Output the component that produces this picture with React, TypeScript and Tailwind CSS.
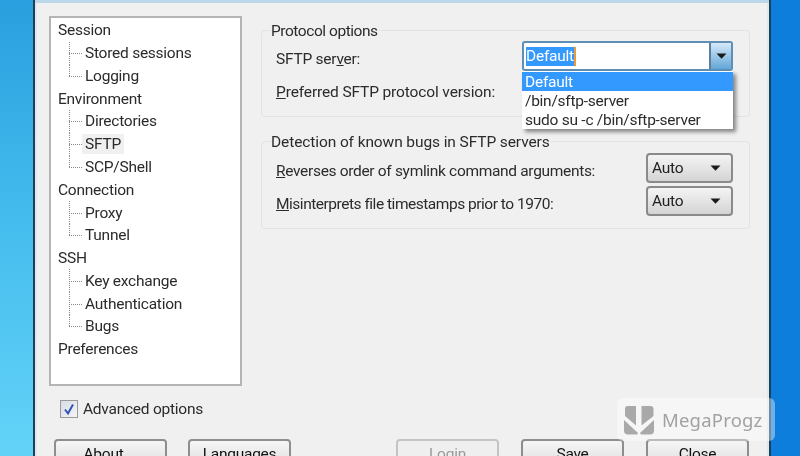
const tree: { label: string; children?: string[]; selected?: string }[] = [
  { label: "Session", children: ["Stored sessions", "Logging"] },
  { label: "Environment", children: ["Directories", "SFTP", "SCP/Shell"], selected: "SFTP" },
  { label: "Connection", children: ["Proxy", "Tunnel"] },
  { label: "SSH", children: ["Key exchange", "Authentication", "Bugs"] },
  { label: "Preferences" },
];

function Caret() {
  return (
    <svg width="11" height="6" viewBox="0 0 11 6" className="shrink-0">
      <path d="M0.5 0.5h10L5.5 5.8z" fill="#1a1a1a" />
    </svg>
  );
}

function AutoSelect() {
  return (
    <div className="flex h-[30px] w-[87px] items-center justify-between rounded-[4px] border-2 border-[#8a8a8a] bg-gradient-to-b from-[#f4f4f4] to-[#d4d4d4] pl-[4px] pr-[10px] text-[#222]">
      <span>Auto</span>
      <Caret />
    </div>
  );
}

function Button({ label, width, disabled, extra }: { label: string; width: string; disabled?: boolean; extra?: string }) {
  return (
    <div
      className={`flex h-[32px] shrink-0 justify-center rounded-[4px] border-2 pt-[3px] ${width} ${extra ?? ""} ${
        disabled
          ? "border-[#c4c4c4] bg-[#efefef] text-[#9a9a9a]"
          : "border-[#8e8e8e] bg-gradient-to-b from-[#f6f6f6] to-[#dcdcdc] text-[#111]"
      }`}
    >
      {label}
    </div>
  );
}

export default function App() {
  return (
    <div className="relative flex h-[456px] w-[800px] overflow-hidden font-['Roboto','Noto_Sans',sans-serif] text-[15.5px] leading-[20px] tracking-[-0.25px] text-[#2b2b2b] blur-[0.4px]">
      <div className="w-[33px] shrink-0 bg-gradient-to-b from-[#2a9fdf] via-[#45bdee] to-[#63d3f8]" />
      <div className="flex min-w-0 flex-1 flex-col border-x-2 border-[#1f3f57] bg-[#f0f0f0] shadow-[inset_2px_0_0_#dde8f0,inset_-2px_0_0_#dde8f0]">
        <div className="h-[3px] shrink-0 bg-[#bcd6ea]" />
        <div className="flex gap-[19px] pl-[14px] pr-[19px] pt-[13px]">
          <div className="h-[370px] w-[193px] shrink-0 border-2 border-[#b4b4b4] bg-white pl-[7px] pt-[1px]">
            {tree.map((node) => (
              <div key={node.label}>
                <div className="flex h-[22.78px] items-center">{node.label}</div>
                {node.children?.map((child, i) => {
                  const last = i === node.children!.length - 1;
                  return (
                    <div key={child} className="flex h-[22.78px] items-center pl-[11px]">
                      <div className="relative h-full w-[16px] shrink-0">
                        <div
                          className={`w-[1px] border-l border-dotted border-[#8a8a8a] ${last ? "h-1/2" : "h-full"}`}
                        />
                        <div className="absolute left-0 top-1/2 w-[13px] border-t border-dotted border-[#8a8a8a]" />
                      </div>
                      <span className={child === node.selected ? "-mx-[3px] bg-[#f0f0f0] px-[3px]" : ""}>{child}</span>
                    </div>
                  );
                })}
              </div>
            ))}
          </div>

          <div className="flex min-w-0 flex-1 flex-col gap-[14px] pt-[3px]">
            <fieldset className="h-[98px] rounded-[4px] border border-[#e3e3e3] pl-[14px] pr-[16px]">
              <legend className="-ml-[5px] bg-[#f0f0f0] pr-[1px] pt-[2px] tracking-[-0.45px]">Protocol options</legend>
              <div className="flex h-[32px] items-center pt-[3px]">
                <span>
                  SFTP ser<span className="underline">v</span>er:
                </span>
              </div>
              <div className="flex h-[36px] items-center pt-[2px]">
                <span className="tracking-[-0.13px]">
                  <span className="underline">P</span>referred SFTP protocol version:
                </span>
              </div>
            </fieldset>

            <fieldset className="h-[98px] rounded-[4px] border border-[#e3e3e3] pl-[14px] pr-[16px]">
              <legend className="-ml-[5px] bg-[#f0f0f0] pr-[1px] pt-[1px] tracking-[-0.1px]">Detection of known bugs in SFTP servers</legend>
              <div className="flex h-[32px] items-center justify-between">
                <span className="pt-[6px] tracking-[-0.32px]">
                  <span className="underline">R</span>everses order of symlink command arguments:
                </span>
                <AutoSelect />
              </div>
              <div className="flex h-[34px] items-center justify-between">
                <span className="pt-[6px] tracking-[-0.48px]">
                  <span className="underline">M</span>isinterprets file timestamps prior to 1970:
                </span>
                <AutoSelect />
              </div>
            </fieldset>
          </div>
        </div>

        <div className="flex h-[46px] items-center gap-[5px] pl-[25px] pt-[13px]">
          <div className="flex h-[18px] w-[18px] items-center justify-center border border-[#9a9a9a] bg-gradient-to-br from-[#d8dce4] to-[#f4f5f8]">
            <svg width="14" height="14" viewBox="0 0 14 14">
              <path d="M3 7.5l3 4L11 2.5" fill="none" stroke="#3454b4" strokeWidth="2" />
            </svg>
          </div>
          <span>Advanced options</span>
        </div>

        <div className="flex pl-[19px] pr-[20px] pt-[20px]">
          <Button label="About" width="w-[113px]" extra="pr-[14px]" />
          <div className="w-[21px]" />
          <Button label="Languages" width="w-[103px]" />
          <div className="flex-1" />
          <Button label="Login" width="w-[103px]" disabled />
          <div className="w-[22px]" />
          <Button label="Save" width="w-[103px]" />
          <div className="w-[22px]" />
          <Button label="Close" width="w-[103px]" />
        </div>
      </div>
      <div className="w-[29px] shrink-0 bg-[#0d7edb]" />

      <div className="absolute left-[522px] top-[41px] w-[211px]">
        <div className="flex h-[30px] items-stretch rounded-[3px] border-2 border-[#5e8fb4] bg-white">
          <div className="flex flex-1 items-center pl-[2px]">
            <span className="border-r-2 border-[#e99a3c] bg-[#3399ff] leading-[19px] text-white">Default</span>
          </div>
          <div className="flex w-[22px] items-center justify-center border-l-2 border-[#5e7f9c] bg-gradient-to-b from-[#d4e9f8] to-[#62a7d8]">
            <Caret />
          </div>
        </div>
        <div className="bg-white pt-[1px] shadow-[3px_3px_4px_rgba(0,0,0,0.45)]">
          <div className="h-[19px] bg-[#3399ff] pl-[3px] leading-[20px] text-white">Default</div>
          <div className="h-[19px] pl-[3px] leading-[20px]">/bin/sftp-server</div>
          <div className="h-[19px] pl-[3px] leading-[20px]">sudo su -c /bin/sftp-server</div>
        </div>
      </div>

      <div className="absolute left-[617px] top-[398px] flex h-[43px] w-[158px] items-center gap-[8px] rounded-[6px] bg-white/40 pl-[7px]">
        <svg width="30" height="30" viewBox="0 0 30 30">
          <path d="M3.5 1h8.5v19.5L1 11V4q0-3 2.5-3z" fill="#a9a9a9" />
          <path d="M17.5 1h9q3 0 3 3v7l-12 9.5z" fill="#a9a9a9" />
          <path d="M0 15l14 13-1 1.5H4q-4 0-4-4z" fill="#a9a9a9" />
          <path d="M30 15L16 28l1 1.5h9q4 0 4-4z" fill="#a9a9a9" />
        </svg>
        <span className="font-['Noto_Sans',sans-serif] text-[18.5px] tracking-[0.2px] text-[#a2a2a2]">MegaProgz</span>
      </div>
    </div>
  );
}
